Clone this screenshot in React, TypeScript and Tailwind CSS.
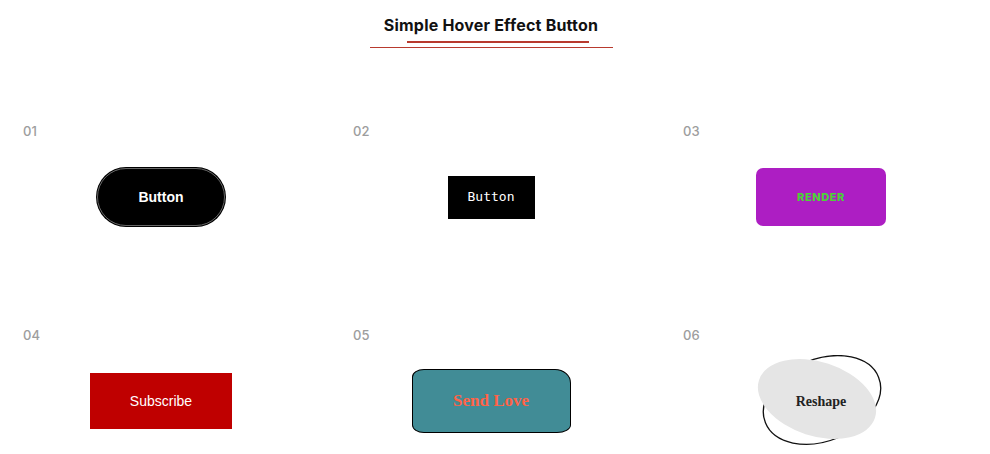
import React from "react";

interface ICellProps {
  num: string;
  children: React.ReactNode;
}

const Cell: React.FunctionComponent<ICellProps> = ({ num, children }) => {
  return (
    <div className="h-[204px]">
      <div className="pl-[23px] h-5 leading-5 text-[13px] font-medium text-[#9d9d9d] font-['Inter',sans-serif]">
        {num}
      </div>
      <div className="h-[112px] pr-2 flex items-center justify-center">
        {children}
      </div>
    </div>
  );
};

const ReshapeButton = () => (
  <div className="relative w-[130px] h-[92px] flex items-center justify-center">
    <svg
      className="absolute inset-0"
      width="130"
      height="92"
      viewBox="0 0 130 92"
    >
      <ellipse
        cx="66"
        cy="45"
        rx="61"
        ry="41"
        transform="rotate(-22 66 45)"
        fill="none"
        stroke="#111"
        strokeWidth="1.3"
      />
      <ellipse
        cx="61"
        cy="44"
        rx="61"
        ry="37"
        transform="rotate(18 61 44)"
        fill="#e5e5e5"
      />
    </svg>
    <span className="relative font-['Liberation_Serif',serif] font-bold text-[14px] text-[#222]">
      Reshape
    </span>
  </div>
);

export default function App() {
  return (
    <div className="w-[990px] h-[454px] overflow-hidden bg-white">
      <div className="pt-[13px] pr-2 flex flex-col items-center">
        <h1 className="h-6 leading-6 text-[16px] font-bold text-[#111] font-['Inter',sans-serif] tracking-[0.2px]">
          Simple Hover Effect Button
        </h1>
        <div className="mt-1 ml-[14px] w-[182px] h-[2px] bg-[#b83a2e]" />
        <div className="mt-1 w-[243px] h-px bg-[#b83a2e]" />
      </div>

      <div className="mt-[73px] grid grid-cols-3">
        <Cell num="01">
          <button className="w-[128px] h-[58px] rounded-full bg-black border border-[#666] ring-1 ring-black text-white text-[14px] font-bold font-['Liberation_Sans',sans-serif]">
            Button
          </button>
        </Cell>
        <Cell num="02">
          <button className="w-[87px] h-[43px] bg-black text-white text-[13px] font-['DejaVu_Sans_Mono',monospace]">
            Button
          </button>
        </Cell>
        <Cell num="03">
          <button className="w-[130px] h-[58px] rounded-[7px] bg-[#ad1ec3] text-[#4cd137] text-[11px] font-extrabold tracking-[0.6px] font-['Inter',sans-serif]">
            RENDER
          </button>
        </Cell>
        <Cell num="04">
          <button className="w-[142px] h-[56px] bg-[#bf0000] text-white text-[14px] font-['Liberation_Sans',sans-serif]">
            Subscribe
          </button>
        </Cell>
        <Cell num="05">
          <button className="w-[159px] h-[64px] bg-[#418c96] border border-black rounded-[12px_16px_14px_12px/8px_14px_8px_8px] text-[#ff6347] text-[17px] font-bold font-['Liberation_Serif',serif]">
            Send Love
          </button>
        </Cell>
        <Cell num="06">
          <ReshapeButton />
        </Cell>
      </div>
    </div>
  );
}
